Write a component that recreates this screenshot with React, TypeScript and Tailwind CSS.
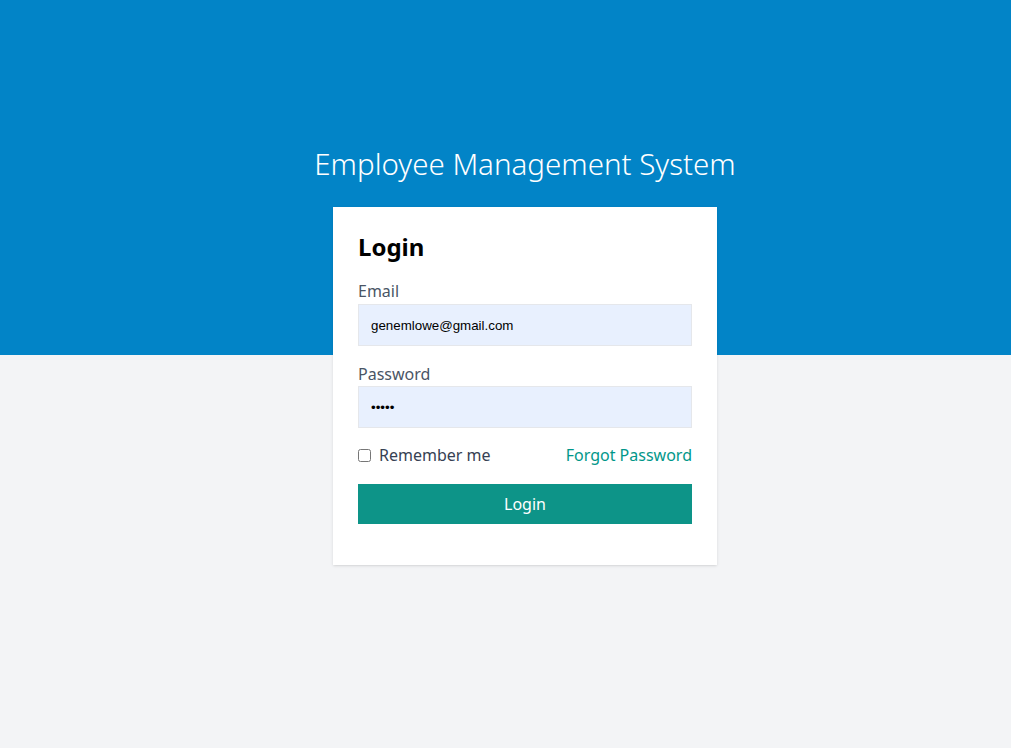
export default function App() {
  return (
    <div className="min-h-screen w-full bg-[linear-gradient(to_bottom,#0284c7_355px,#f3f4f6_355px)] font-['Noto_Sans',sans-serif] pt-[146px] pl-[39px] flex flex-col items-center">
      <h1 className="text-[29.5px] leading-9 font-light text-white mb-[25px]">Employee Management System</h1>

      <div className="w-[384px] bg-white shadow px-[25px] pt-6 pb-[41px]">
        <h2 className="text-2xl font-bold text-black leading-8">Login</h2>

        <form className="mt-4" onSubmit={(e) => e.preventDefault()}>
          <label className="block text-gray-600 leading-6">Email</label>
          <input
            type="email"
            defaultValue="genemlowe@gmail.com"
            className="mt-px w-full h-[42px] px-3 bg-[#e8f0fe] border border-gray-200 text-[13.33px] text-black font-['Liberation_Sans',Arial,sans-serif] outline-none"
          />

          <label className="block text-gray-600 leading-6 mt-4">Password</label>
          <input
            type="password"
            defaultValue="12345"
            className="w-full h-[42px] px-3 bg-[#e8f0fe] border border-gray-200 text-[13.33px] text-black font-['Liberation_Sans',Arial,sans-serif] outline-none"
          />

          <div className="mt-[15px] flex items-center justify-between leading-6">
            <label className="flex items-center text-gray-700">
              <input type="checkbox" className="w-[13px] h-[13px] m-0" />
              <span className="ml-2">Remember me</span>
            </label>
            <a href="#" className="text-teal-600">Forgot Password</a>
          </div>

          <button type="submit" className="mt-[17px] w-full h-10 bg-[#0d9488] text-white leading-6">
            Login
          </button>
        </form>
      </div>
    </div>
  );
}
